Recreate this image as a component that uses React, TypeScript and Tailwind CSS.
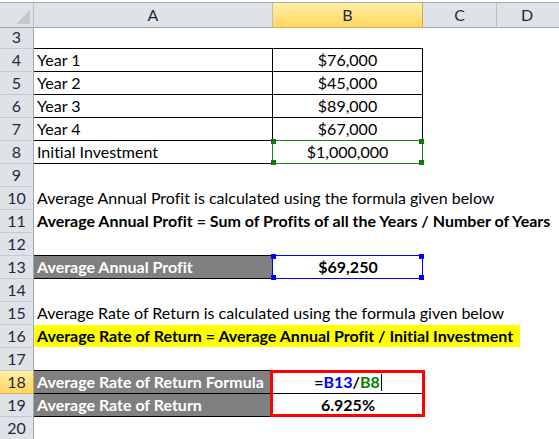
import React from "react";

const FONT = "font-['Lato','Liberation_Sans',sans-serif] [font-variant-ligatures:none]";

type CellProps = { children?: React.ReactNode; className?: string };

function RowHead({ n, active }: { n: number; active?: boolean }) {
  return (
    <div
      className={
        "h-[23px] border-b border-r flex items-center justify-center text-[16px] " +
        (active
          ? "bg-gradient-to-b from-[#fff0a3] to-[#ffd560] border-b-[#e2b252] border-r-[#c9a04a] text-[#1d2b3c]"
          : "bg-[#dfe3e8] border-b-[#c4cad2] border-r-[#9ea6b0] text-[#1d2b3c]")
      }
    >
      {n}
    </div>
  );
}

function Row({
  n,
  a,
  b,
  active,
}: {
  n: number;
  a?: CellProps;
  b?: CellProps;
  active?: boolean;
}) {
  return (
    <div className="grid grid-cols-[34px_239px_150px_74px_1fr] h-[23px]">
      <RowHead n={n} active={active} />
      <div className={"h-[23px] relative " + (a?.className ?? "")}>{a?.children}</div>
      <div className={"h-[23px] relative " + (b?.className ?? "")}>{b?.children}</div>
      <div className="h-[23px]" />
      <div className="h-[23px]" />
    </div>
  );
}

const cellTxt = "absolute left-[3px] top-0 h-[22px] flex items-center whitespace-nowrap";
const centerTxt = "h-[22px] flex items-center justify-center whitespace-nowrap";

function Handles({ color }: { color: string }) {
  const s = "absolute w-[5px] h-[5px] " + color;
  return (
    <>
      <div className={s + " -left-[2px] -top-[2px]"} />
      <div className={s + " -right-[2px] -top-[2px]"} />
      <div className={s + " -left-[2px] -bottom-[2px]"} />
      <div className={s + " -right-[2px] -bottom-[2px]"} />
    </>
  );
}

export default function App() {
  const boxed = "border-b border-r border-black";
  return (
    <div className={"w-[559px] h-[439px] overflow-hidden relative bg-white text-black " + FONT}>
      <div className="h-[2px] bg-white" />
      {/* column header */}
      <div className="grid grid-cols-[34px_239px_150px_74px_1fr] h-[24px] border-t border-[#a5adb7] text-[16px] text-[#1d2b3c]">
        <div className="bg-[#dfe3e8] border-r border-b border-r-[#b8bfc7] border-b-[#9ea6b0] relative">
          <svg className="absolute right-[3px] bottom-[3px]" width="14" height="14" viewBox="0 0 14 14">
            <polygon points="14,0 14,14 0,14" fill="#c3c8ce" />
          </svg>
        </div>
        <div className="bg-[#dfe3e8] border-r border-b border-r-[#b8bfc7] border-b-[#9ea6b0] flex items-center justify-center">
          A
        </div>
        <div className="bg-gradient-to-b from-[#fff0a3] to-[#ffd560] border-r border-b border-r-[#d9a648] border-b-[#e2b252] flex items-center justify-center">
          B
        </div>
        <div className="bg-[#dfe3e8] border-r border-b border-r-[#b8bfc7] border-b-[#9ea6b0] flex items-center justify-center">
          C
        </div>
        <div className="bg-[#dfe3e8] border-b border-b-[#9ea6b0] flex items-center justify-center">
          <span className="-ml-[2px]">D</span>
        </div>
      </div>

      <div className="text-[16px]">
        <Row n={3} a={{ className: "border-b border-black" }} b={{ className: "border-b border-black" }} />
        {[
          ["Year 1", "$76,000"],
          ["Year 2", "$45,000"],
          ["Year 3", "$89,000"],
          ["Year 4", "$67,000"],
          ["Initial Investment", "$1,000,000"],
        ].map(([l, v], i) => (
          <Row
            key={l}
            n={4 + i}
            a={{ className: boxed, children: <div className={cellTxt}>{l}</div> }}
            b={{
              className: boxed,
              children: <div className={centerTxt}>{v}</div>,
            }}
          />
        ))}
        <Row n={9} />
        <Row
          n={10}
          a={{
            className: "z-10",
            children: <div className={cellTxt}>Average Annual Profit is calculated using the formula given below</div>,
          }}
        />
        <Row
          n={11}
          a={{
            className: "z-10",
            children: (
              <div className={cellTxt + " font-bold"}>
                Average Annual Profit = Sum of Profits of all the Years / Number of Years
              </div>
            ),
          }}
        />
        <Row n={12} a={{ className: "border-b border-black" }} b={{ className: "border-b border-black" }} />
        <Row
          n={13}
          a={{
            className: "border-b border-black bg-[#808080] h-[23px]",
            children: <div className={cellTxt + " font-bold text-white"}>Average Annual Profit</div>,
          }}
          b={{
            className: "border-b border-black",
            children: <div className={centerTxt + " font-bold"}>$69,250</div>,
          }}
        />
        <Row n={14} />
        <Row
          n={15}
          a={{
            className: "z-10",
            children: <div className={cellTxt}>Average Rate of Return is calculated using the formula given below</div>,
          }}
        />
        <Row
          n={16}
          a={{
            className: "z-10",
            children: (
              <div className="absolute left-0 top-0 h-[22px] w-[486px] bg-[#ffff00] pl-[3px] flex items-center whitespace-nowrap font-bold">
                Average Rate of Return = Average Annual Profit / Initial Investment
              </div>
            ),
          }}
        />
        <Row n={17} a={{ className: "border-b border-black" }} b={{ className: "border-b border-black" }} />
        <Row
          n={18}
          active
          a={{
            className: "border-b border-black bg-[#808080]",
            children: <div className={cellTxt + " font-bold text-white"}>Average Rate of Return Formula</div>,
          }}
          b={{
            className: "border-b border-black",
            children: (
              <div className={centerTxt + " font-bold"}>
                <span>=</span>
                <span className="text-[#0000ff]">B13</span>
                <span>/</span>
                <span className="text-[#008000]">B8</span>
                <span className="inline-block w-px h-[17px] bg-black ml-[1px]" />
              </div>
            ),
          }}
        />
        <Row
          n={19}
          a={{
            className: "border-b border-black bg-[#808080]",
            children: <div className={cellTxt + " font-bold text-white"}>Average Rate of Return</div>,
          }}
          b={{
            className: "border-b border-black",
            children: <div className={centerTxt + " font-bold"}>6.925%</div>,
          }}
        />
        <Row n={20} />
      </div>

      {/* selection overlays */}
      <div className="absolute left-[272px] top-[140px] w-[151px] h-[24px] border border-[#138a13] pointer-events-none">
        <Handles color="bg-[#0b7a0b]" />
      </div>
      <div className="absolute left-[272px] top-[255px] w-[151px] h-[24px] border border-[#0000ff] pointer-events-none">
        <Handles color="bg-[#0000ff]" />
      </div>
      <div className="absolute left-[270px] top-[370px] w-[155px] h-[47px] border-[3px] border-[#ff0000] pointer-events-none" />
    </div>
  );
}
